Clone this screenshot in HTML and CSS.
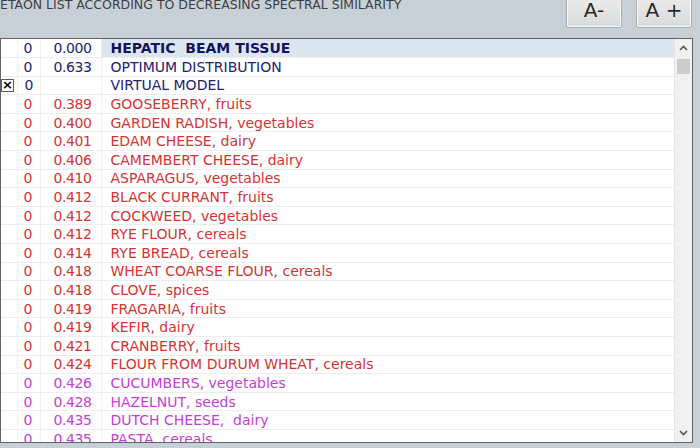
FILE: index.html
```html
<!DOCTYPE html>
<html lang="en">
<head>
    <meta charset="UTF-8">
    <title>Etaon List</title>
    <link rel="stylesheet" href="styles.css">
</head>
<body>
    <div class="top">
        <div class="title">ETAON LIST ACCORDING TO DECREASING SPECTRAL SIMILARITY</div>
        <div class="zoom">
            <button>A-</button>
            <button>A +</button>
        </div>
    </div>
    <div class="list">
        <div class="rows">
            <table>
                <colgroup>
                    <col class="c-check"><col class="c-flag"><col class="c-val"><col>
                </colgroup>
                <tbody>
                    <tr class="ref"><td></td><td>0</td><td>0.000</td><td class="name sel">HEPATIC&nbsp; BEAM TISSUE</td></tr>
                    <tr class="ref"><td></td><td>0</td><td>0.633</td><td class="name">OPTIMUM DISTRIBUTION</td></tr>
                    <tr class="ref"><td><span class="box">&times;</span></td><td class="left">0</td><td></td><td class="name">VIRTUAL MODEL</td></tr>
                    <tr class="red"><td></td><td>0</td><td>0.389</td><td class="name">GOOSEBERRY, fruits</td></tr>
                    <tr class="red"><td></td><td>0</td><td>0.400</td><td class="name">GARDEN RADISH, vegetables</td></tr>
                    <tr class="red"><td></td><td>0</td><td>0.401</td><td class="name">EDAM CHEESE, dairy</td></tr>
                    <tr class="red"><td></td><td>0</td><td>0.406</td><td class="name">CAMEMBERT CHEESE, dairy</td></tr>
                    <tr class="red"><td></td><td>0</td><td>0.410</td><td class="name">ASPARAGUS, vegetables</td></tr>
                    <tr class="red"><td></td><td>0</td><td>0.412</td><td class="name">BLACK CURRANT, fruits</td></tr>
                    <tr class="red"><td></td><td>0</td><td>0.412</td><td class="name">COCKWEED, vegetables</td></tr>
                    <tr class="red"><td></td><td>0</td><td>0.412</td><td class="name">RYE FLOUR, cereals</td></tr>
                    <tr class="red"><td></td><td>0</td><td>0.414</td><td class="name">RYE BREAD, cereals</td></tr>
                    <tr class="red"><td></td><td>0</td><td>0.418</td><td class="name">WHEAT COARSE FLOUR, cereals</td></tr>
                    <tr class="red"><td></td><td>0</td><td>0.418</td><td class="name">CLOVE, spices</td></tr>
                    <tr class="red"><td></td><td>0</td><td>0.419</td><td class="name">FRAGARIA, fruits</td></tr>
                    <tr class="red"><td></td><td>0</td><td>0.419</td><td class="name">KEFIR, dairy</td></tr>
                    <tr class="red"><td></td><td>0</td><td>0.421</td><td class="name">CRANBERRY, fruits</td></tr>
                    <tr class="red"><td></td><td>0</td><td>0.424</td><td class="name">FLOUR FROM DURUM WHEAT, cereals</td></tr>
                    <tr class="pink"><td></td><td>0</td><td>0.426</td><td class="name">CUCUMBERS, vegetables</td></tr>
                    <tr class="pink"><td></td><td>0</td><td>0.428</td><td class="name">HAZELNUT, seeds</td></tr>
                    <tr class="pink"><td></td><td>0</td><td>0.435</td><td class="name">DUTCH CHEESE,&nbsp; dairy</td></tr>
                    <tr class="pink"><td></td><td>0</td><td>0.435</td><td class="name">PASTA, cereals</td></tr>
                </tbody>
            </table>
        </div>
        <div class="scroll">
            <svg class="arrow" width="9" height="6" viewBox="0 0 9 6"><path d="M1 5 L4.5 1.5 L8 5" fill="none" stroke="#555" stroke-width="1.6"/></svg>
            <div class="track"><div class="thumb"></div></div>
            <svg class="arrow" width="9" height="6" viewBox="0 0 9 6"><path d="M1 1 L4.5 4.5 L8 1" fill="none" stroke="#555" stroke-width="1.6"/></svg>
        </div>
    </div>
</body>
</html>
```
FILE: styles.css
```css
body {
    margin: 0;
    background-color: #c8d0d7;
    font-family: "DejaVu Sans", Verdana, sans-serif;
    overflow: hidden;
}
.top {
    display: flex;
    justify-content: space-between;
    height: 38px;
}
.title {
    margin-top: -3px;
    font-size: 12.5px;
    color: #3a3f44;
    white-space: nowrap;
}
.zoom {
    display: flex;
    gap: 14px;
    margin-right: 8px;
    margin-top: -14px;
}
.zoom button {
    width: 56px;
    height: 42px;
    padding: 6px 0 0;
    border: 1px solid #a9aeb2;
    border-radius: 2px;
    background: linear-gradient(#f2f2f2, #d9dadb);
    box-shadow: inset 0 0 0 1px #fafafa;
    font-family: "DejaVu Sans", sans-serif;
    font-size: 20px;
    color: #2a2a2a;
}
.list {
    display: flex;
    width: 691px;
    height: 403px;
    border: 1px solid #5f6469;
    background-color: #fff;
    overflow: hidden;
}
.rows {
    flex: 1;
    overflow: hidden;
}
table {
    width: 100%;
    border-collapse: collapse;
    table-layout: fixed;
    font-size: 14px;
}
.c-check { width: 16px; }
.c-flag { width: 23px; }
.c-val { width: 61px; }
tr {
    height: 18.6px;
}
td {
    padding: 0;
    border-bottom: 1px solid #ededed;
    border-right: 1px solid #f1f1f1;
    text-align: right;
    white-space: nowrap;
    line-height: 16px;
}
td:nth-child(2) { padding-right: 7px; }
td:nth-child(3) { padding-right: 9px; letter-spacing: -0.4px; }
td.left { text-align: left; padding-left: 7px; padding-right: 0; }
td.name {
    text-align: left;
    padding-left: 9px;
    border-right: none;
}
td.sel {
    background-color: #dce6f1;
    font-weight: bold;
    color: #14145c;
}
.ref { color: #22226e; }
.red { color: #d33434; }
.pink { color: #c53ed6; }
.box {
    display: inline-block;
    width: 11px;
    height: 11px;
    margin: 2px 3px 0 0;
    border: 1px solid #5a5a5a;
    background-color: #fff;
    color: #000;
    font-size: 13px;
    font-weight: bold;
    line-height: 10px;
    text-align: center;
    vertical-align: top;
}
.scroll {
    display: flex;
    flex-direction: column;
    align-items: center;
    width: 17px;
    background-color: #f1f1f1;
    border-left: 1px solid #e6e6e6;
}
.arrow {
    margin: 6px 0;
    flex: none;
}
.track {
    flex: 1;
    width: 100%;
}
.thumb {
    margin: 2px 2px 0;
    height: 15px;
    background-color: #cdcdcd;
}
```
